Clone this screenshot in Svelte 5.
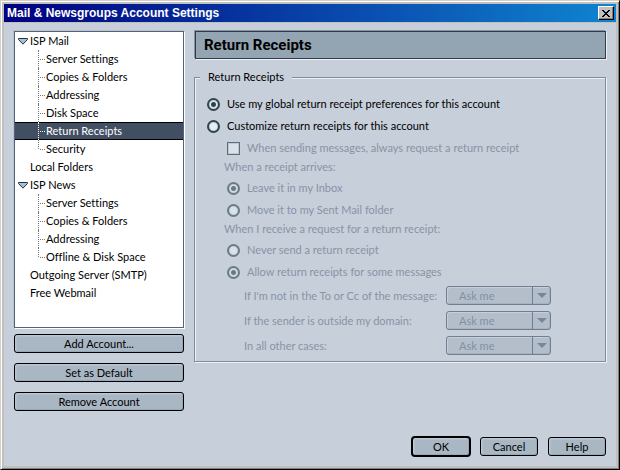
<script>
  const tree = [
    { name: 'ISP Mail', children: ['Server Settings', 'Copies & Folders', 'Addressing', 'Disk Space', 'Return Receipts', 'Security'] },
    { name: 'Local Folders' },
    { name: 'ISP News', children: ['Server Settings', 'Copies & Folders', 'Addressing', 'Offline & Disk Space'] },
    { name: 'Outgoing Server (SMTP)' },
    { name: 'Free Webmail' }
  ];
  const cases = ["If I'm not in the To or Cc of the message:", 'If the sender is outside my domain:', 'In all other cases:'];
  let selected = $state('ISP Mail/Return Receipts');
  let mode = $state('global');
  let locked = $derived(mode === 'global');
</script>

<main class="window">
  <header class="titlebar">
    <h1>Mail &amp; Newsgroups Account Settings</h1>
    <button class="close" aria-label="Close">
      <svg width="8" height="7" viewBox="0 0 8 7" shape-rendering="crispEdges" aria-hidden="true">
        <path d="M0 0h2v1h1v1h2v-1h1v-1h2v1h-1v1h-1v1h-1v1h1v1h1v1h1v1h-2v-1h-1v-1h-2v1h-1v1h-2v-1h1v-1h1v-1h1v-1h-1v-1h-1v-1h-1z" />
      </svg>
    </button>
  </header>

  <div class="body">
    <nav class="side">
      <ul class="tree">
        {#each tree as account}
          <li>
            <button class="row top">
              {#if account.children}
                <svg class="twisty" width="10" height="7" viewBox="0 0 10 7" aria-hidden="true">
                  <path d="M0.5 0.5H9.5V1.5L5 6.2L0.5 1.5Z" fill="#a9c0d2" stroke="#26323f" />
                </svg>
              {/if}
              {account.name}
            </button>
            {#if account.children}
              <ul class="kids">
                {#each account.children as child}
                  <li>
                    <button
                      class="row child"
                      class:selected={selected === `${account.name}/${child}`}
                      onclick={() => (selected = `${account.name}/${child}`)}>{child}</button>
                  </li>
                {/each}
              </ul>
            {/if}
          </li>
        {/each}
      </ul>
      <div class="actions">
        <button class="btn">Add Account...</button>
        <button class="btn">Set as Default</button>
        <button class="btn">Remove Account</button>
      </div>
    </nav>

    <section class="panel">
      <h2>Return Receipts</h2>
      <fieldset>
        <legend>Return Receipts</legend>
        <label class="opt"><input type="radio" name="mode" value="global" bind:group={mode} />Use my global return receipt preferences for this account</label>
        <label class="opt"><input type="radio" name="mode" value="custom" bind:group={mode} />Customize return receipts for this account</label>
        <div class="custom" class:locked>
          <label class="opt in"><input type="checkbox" disabled={locked} />When sending messages, always request a return receipt</label>
          <p>When a receipt arrives:</p>
          <label class="opt in"><input type="radio" name="arrive" checked disabled={locked} />Leave it in my Inbox</label>
          <label class="opt in"><input type="radio" name="arrive" disabled={locked} />Move it to my Sent Mail folder</label>
          <p>When I receive a request for a return receipt:</p>
          <label class="opt in"><input type="radio" name="reply" disabled={locked} />Never send a return receipt</label>
          <label class="opt in"><input type="radio" name="reply" checked disabled={locked} />Allow return receipts for some messages</label>
          <div class="cases">
            {#each cases as text, i}
              <label for="case{i}">{text}</label>
              <div class="drop">
                <select id="case{i}" disabled={locked}><option>Ask me</option></select>
                <span class="arrow">
                  <svg width="10" height="5" viewBox="0 0 10 5" aria-hidden="true"><path d="M0 0H10L5 5Z" /></svg>
                </span>
              </div>
            {/each}
          </div>
        </div>
      </fieldset>
    </section>
  </div>

  <footer>
    <button class="btn ok">OK</button>
    <button class="btn">Cancel</button>
    <button class="btn">Help</button>
  </footer>
</main>

<style>
  :global(body) {
    margin: 0;
    background: #c8d0dc;
  }
  .window {
    box-sizing: border-box;
    min-height: 100vh;
    display: flex;
    flex-direction: column;
    padding: 3px;
    border: 1px solid;
    border-color: #d4d0c8 #000 #000 #d4d0c8;
    box-shadow: inset 1px 1px #fff, inset -1px -1px #808080, inset 3px 3px #c0c0c0, inset -3px -3px #c0c0c0;
    background: #c7cfdb;
    color: #000;
    font: 11px/16px Lato, "Liberation Sans", Arial, sans-serif;
  }
  .window, button, select { font-variant-ligatures: none; }
  button, select { font-family: inherit; font-size: inherit; color: inherit; }
  h1, h2, p, ul { margin: 0; padding: 0; list-style: none; }
  .titlebar {
    display: flex;
    align-items: center;
    justify-content: space-between;
    height: 18px;
    padding: 0 2px 0 3px;
    background: linear-gradient(90deg, #000080, #1084d0);
    border-bottom: 1px solid #c0c0c0;
  }
  h1 { font: bold 12px/18px "Liberation Sans", Arial, sans-serif; color: #fff; }
  .close {
    box-sizing: border-box;
    width: 16px;
    height: 14px;
    padding: 0;
    display: flex;
    align-items: center;
    justify-content: center;
    background: #c0c0c0;
    border: 1px solid;
    border-color: #fff #000 #000 #fff;
    box-shadow: inset -1px -1px #808080;
  }
  .body { display: flex; gap: 9px; padding: 7px 9px 0 9px; }
  .side { flex: 0 0 171px; display: flex; flex-direction: column; margin-left: 1px; }
  .tree {
    min-height: 295px;
    margin: 1px 1px 0 0;
    background: #fff;
    border: 1px solid #56627a;
    box-shadow: 1px 1px #fff, -1px -1px #b9c1d0;
  }
  .row {
    display: block;
    position: relative;
    width: 100%;
    height: 18px;
    padding: 0 0 0 15px;
    border: 0;
    background: none;
    text-align: left;
    line-height: 18px;
  }
  .twisty { position: absolute; left: 3px; top: 6px; }
  .child { padding-left: 31px; }
  .child::before {
    content: "";
    position: absolute;
    left: 23px;
    top: 0;
    bottom: 0;
    border-left: 1px dotted #777;
  }
  .child::after {
    content: "";
    position: absolute;
    left: 25px;
    top: 9px;
    width: 5px;
    border-top: 1px dotted #777;
  }
  li:last-child > .child::before { bottom: 9px; }
  .selected { background: #424f63; color: #fff; box-shadow: inset 0 1px #000, inset 0 -1px #000; }
  .selected::before, .selected::after { border-color: #fff; }
  .actions { display: flex; flex-direction: column; gap: 10px; margin: 6px 1px 0 0; }
  .btn {
    box-sizing: border-box;
    height: 19px;
    padding: 0;
    line-height: 17px;
    border: 1px solid #000;
    border-radius: 3px;
    background: #a9b6c4;
    box-shadow: inset 1px 1px #bac6d1, inset 2px 2px #b2becb, inset -1px -1px #98a7b5;
  }
  .panel { flex: 1; min-width: 0; }
  h2 {
    height: 26px;
    margin: 1px 1px 18px;
    padding-left: 8px;
    border: 1px solid #2e3c4b;
    background: #93a4b2;
    box-shadow: 1px 1px #eef2f6, -1px -1px #8592a2;
    font: bold 15px/27px Roboto, "Liberation Sans", sans-serif;
  }
  fieldset {
    position: relative;
    margin: 0 1px 0 0;
    padding: 15px 10px 3px 11px;
    border: 1px solid #818b9a;
    box-shadow: 1px 1px #eef2f6, inset 1px 1px #eef2f6;
  }
  legend {
    float: left;
    position: absolute;
    top: -9px;
    left: 5px;
    padding: 0 8px;
    background: #c7cfdb;
  }
  .opt { display: flex; align-items: center; gap: 7px; height: 22px; padding-left: 1px; }
  .in { padding-left: 21px; }
  input {
    appearance: none;
    box-sizing: border-box;
    flex: none;
    width: 13px;
    height: 13px;
    margin: 0;
    border: 1px solid #1e2a33;
    background: #e6eff2;
    box-shadow: inset 0 0 0 1px #b3c6ce;
  }
  input[type="radio"] {
    border: 2px solid #33434e;
    border-radius: 50%;
    box-shadow: inset 0 0 0 1px #bcd6de;
  }
  input[type="radio"]:checked { background: radial-gradient(circle, #333f4b 2px, #dcebf0 3px); }
  input:disabled { opacity: 0.6; }
  .locked { color: #8793a5; }
  p { padding-left: 18px; margin-bottom: 2px; }
  .cases {
    display: grid;
    grid-template-columns: 202px 105px;
    align-items: center;
    grid-auto-rows: 25px;
    padding-left: 38px;
  }
  .drop { position: relative; height: 19px; }
  select {
    appearance: none;
    display: block;
    box-sizing: border-box;
    width: 105px;
    height: 19px;
    padding: 0 20px 0 12px;
    border: 1px solid #6f7e92;
    border-radius: 3px;
    background: #b4becb;
    box-shadow: inset 1px 1px #c6d0da, inset -1px -1px #a6b2bf;
    color: #8190a4;
    opacity: 1;
  }
  .arrow {
    position: absolute;
    right: 1px;
    top: 1px;
    bottom: 1px;
    width: 17px;
    display: flex;
    align-items: center;
    justify-content: center;
    border-left: 1px solid #6f7e92;
    pointer-events: none;
    fill: #77869a;
  }
  footer { display: flex; justify-content: flex-end; align-items: center; gap: 10px; margin-top: auto; padding: 0 10px 9px 0; }
  footer .btn { width: 58px; }
  footer .ok { width: 60px; height: 21px; border-width: 2px; border-radius: 4px; margin-right: -1px; }
</style>
